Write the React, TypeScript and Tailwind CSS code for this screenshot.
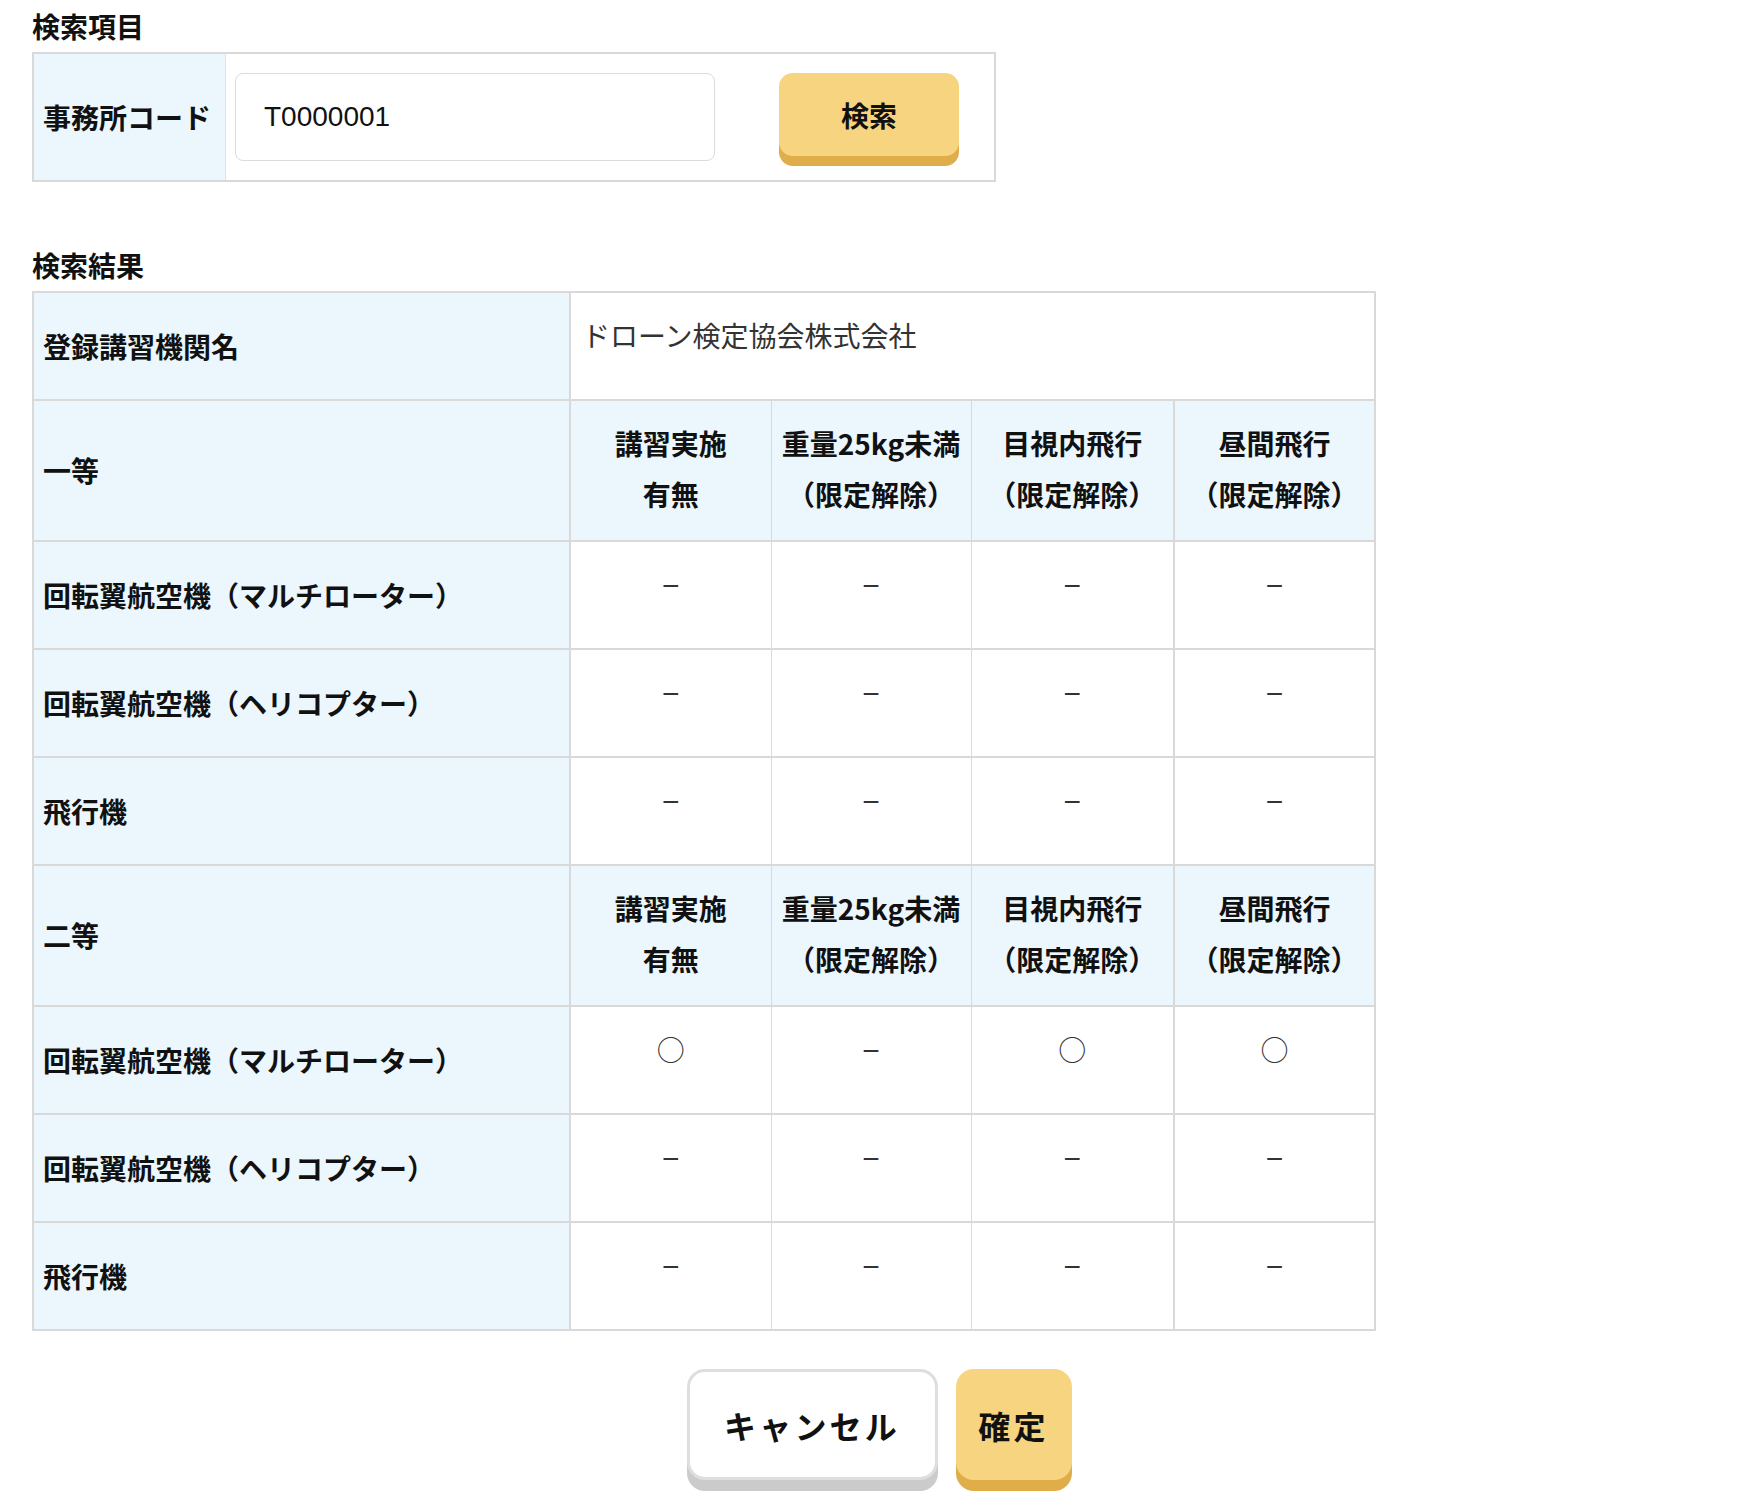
import React from "react";

const FONT = { fontFamily: '"Noto Sans CJK JP", "Noto Sans", sans-serif' };

type Mark = "o" | "-";

const HEAD_COLS = [
  ["講習実施", "有無"],
  ["重量25kg未満", "（限定解除）"],
  ["目視内飛行", "（限定解除）"],
  ["昼間飛行", "（限定解除）"],
];

const ROWS_1: { label: string; marks: Mark[] }[] = [
  { label: "回転翼航空機（マルチローター）", marks: ["-", "-", "-", "-"] },
  { label: "回転翼航空機（ヘリコプター）", marks: ["-", "-", "-", "-"] },
  { label: "飛行機", marks: ["-", "-", "-", "-"] },
];

const ROWS_2: { label: string; marks: Mark[] }[] = [
  { label: "回転翼航空機（マルチローター）", marks: ["o", "-", "o", "o"] },
  { label: "回転翼航空機（ヘリコプター）", marks: ["-", "-", "-", "-"] },
  { label: "飛行機", marks: ["-", "-", "-", "-"] },
];

// 列ごとの左右の罫線（3列目と4列目の境目だけ太い）
const colBorder = [
  "border-l-2 border-r",
  "border-x",
  "border-l border-r-2",
  "border-l-2 border-r-2",
];

function LabelCell({ children }: { children: React.ReactNode }) {
  return (
    <td className="border-2 border-[#d9d9d9] bg-[#ebf6fd] pl-[9px] align-middle text-[28px] font-bold leading-[51px] text-[#111]">
      {children}
    </td>
  );
}

function HeaderRow({ title }: { title: string }) {
  return (
    <tr className="h-[141px]">
      <LabelCell>{title}</LabelCell>
      {HEAD_COLS.map((lines, i) => (
        <td
          key={i}
          className={`${colBorder[i]} border-y-2 border-[#d9d9d9] bg-[#ebf6fd] pt-[17px] text-center align-top text-[28px] font-bold leading-[51px] text-[#111]`}
        >
          <div className="whitespace-nowrap">{lines[0]}</div>
          <div className="whitespace-nowrap">{lines[1]}</div>
        </td>
      ))}
    </tr>
  );
}

function MarkRow({ label, marks }: { label: string; marks: Mark[] }) {
  return (
    <tr className="h-[108px]">
      <LabelCell>{label}</LabelCell>
      {marks.map((m, i) => (
        <td
          key={i}
          className={`${colBorder[i]} border-y-2 border-[#d9d9d9] bg-white pt-[17px] text-center align-top text-[28px] leading-[51px] text-[#333]`}
        >
          {m === "o" ? (
            "○"
          ) : (
            <span className="font-['Liberation_Sans'] text-[30px]">−</span>
          )}
        </td>
      ))}
    </tr>
  );
}

export default function App() {
  return (
    <div className="min-h-[1506px] bg-white pl-[32px] pt-[6px]" style={FONT}>
      {/* 検索項目 */}
      <h2 className="mb-[6px] text-[28px] font-bold leading-[40px] text-[#111]">検索項目</h2>
      <div className="flex h-[130px] w-[964px] border-2 border-[#d9d9d9]">
        <div className="flex w-[192px] items-center border-r border-[#d8e6ef] bg-[#ebf6fd] pl-[9px] text-[28px] font-bold text-[#111]">
          事務所コード
        </div>
        <div className="flex flex-1 items-start pl-[9px] pt-[19px]">
          <div
            className="flex h-[88px] w-[480px] items-center rounded-[8px] border border-[#dcdcdc] pl-[28px] text-[28px] text-[#111]"
            style={{ fontFamily: '"Liberation Sans", "Noto Sans CJK JP", sans-serif' }}
          >
            T0000001
          </div>
          <button className="ml-[64px] flex h-[83px] w-[180px] items-center justify-center rounded-[14px] bg-[#f7d480] text-[28px] font-bold text-[#111] shadow-[0_10px_0_#e0ad4b]">
            検索
          </button>
        </div>
      </div>

      {/* 検索結果 */}
      <h2 className="mb-[6px] mt-[63px] text-[28px] font-bold leading-[40px] text-[#111]">検索結果</h2>
      <table className="w-[1342px] table-fixed border-collapse">
        <colgroup>
          <col className="w-[537px]" />
          <col className="w-[201px]" />
          <col className="w-[200px]" />
          <col className="w-[203px]" />
          <col className="w-[201px]" />
        </colgroup>
        <tbody>
          <tr className="h-[108px]">
            <LabelCell>登録講習機関名</LabelCell>
            <td
              colSpan={4}
              className="border-2 border-[#d9d9d9] bg-white pl-[11px] pt-[17px] align-top text-[28px] leading-[51px] text-[#333]"
            >
              ドローン検定協会株式会社
            </td>
          </tr>
          <HeaderRow title="一等" />
          {ROWS_1.map((r, i) => (
            <MarkRow key={i} label={r.label} marks={r.marks} />
          ))}
          <HeaderRow title="二等" />
          {ROWS_2.map((r, i) => (
            <MarkRow key={i} label={r.label} marks={r.marks} />
          ))}
        </tbody>
      </table>

      {/* ボタン */}
      <div className="mt-[38px] flex justify-center gap-[18px] pr-[32px]">
        <button className="flex h-[111px] w-[251px] items-center justify-center rounded-[18px] border-[3px] border-[#dedede] bg-white text-[32px] font-bold tracking-[0.1em] text-[#111] shadow-[0_11px_0_#cbcbcb]">
          キャンセル
        </button>
        <button className="flex h-[111px] w-[116px] items-center justify-center rounded-[18px] bg-[#f7d480] text-[32px] font-bold tracking-[0.1em] text-[#111] shadow-[0_11px_0_#e0ad4b]">
          確定
        </button>
      </div>
    </div>
  );
}
